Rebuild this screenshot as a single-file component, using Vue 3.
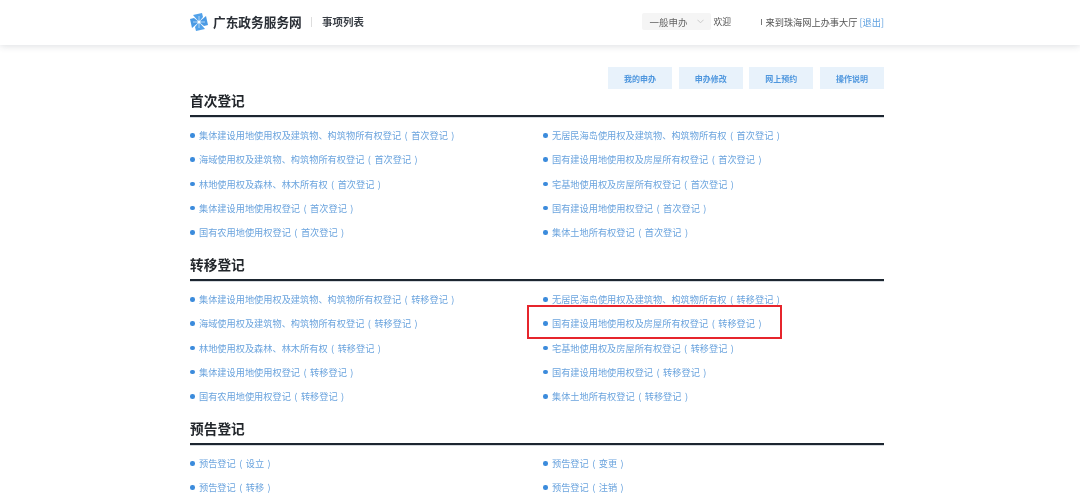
<script setup>
const tops = [
  '集体建设用地使用权及建筑物、构筑物所有权登记',
  '无居民海岛使用权及建筑物、构筑物所有权',
  '海域使用权及建筑物、构筑物所有权登记',
  '国有建设用地使用权及房屋所有权登记',
  '林地使用权及森林、林木所有权',
  '宅基地使用权及房屋所有权登记',
  '集体建设用地使用权登记',
  '国有建设用地使用权登记',
  '国有农用地使用权登记',
  '集体土地所有权登记',
]
const first = tops.map((t) => `${t}  (  首次登记  )`)
const second = tops.map((t) => `${t}  (  转移登记  )`)
const third = ['预告登记  (  设立  )', '预告登记  (  变更  )', '预告登记  (  转移  )', '预告登记  (  注销  )']
const sections = [
  { title: '首次登记', items: first },
  { title: '转移登记', items: second },
  { title: '预告登记', items: third },
]
const tabs = ['我的申办', '申办修改', '网上预约', '操作说明']
const marked = '国有建设用地使用权及房屋所有权登记  (  转移登记  )'
</script>

<template>
  <div class="page">
    <header class="header">
      <div class="wrap head-row">
        <svg class="logo" viewBox="0 0 18 18" width="18" height="18">
          <path d="M9 9 3 2 12 0 13 4Z" fill="#52a2ea" />
          <path d="M9 9 16 3 18 12 14 13Z" fill="#4a9ae4" />
          <path d="M9 9 15 16 6 18 5 14Z" fill="#52a2ea" />
          <path d="M9 9 2 15 0 6 4 5Z" fill="#4a9ae4" />
          <path d="M9 9 9 3M9 9 15 9M9 9 9 15M9 9 3 9" stroke="#d8ebfb" stroke-width=".7" />
          <circle cx="9" cy="9" r="1.6" fill="#fff" />
        </svg>
        <span class="brand">广东政务服务网</span>
        <i class="sep"></i>
        <span class="sub">事项列表</span>
        <div class="right">
          <div class="select">
            <span>一般申办</span>
            <svg viewBox="0 0 8 5" width="7" height="5"><path d="M.5.5 4 4 7.5.5" fill="none" stroke="#c4c4c4" /></svg>
          </div>
          <span class="hello">欢迎</span>
          <i class="tick"></i>
          <span class="hall">来到珠海网上办事大厅</span>
          <a class="exit">[退出]</a>
        </div>
      </div>
    </header>
    <main class="wrap main">
      <nav class="tabs">
        <a v-for="t in tabs" :key="t" class="tab">{{ t }}</a>
      </nav>
      <section v-for="s in sections" :key="s.title" class="section">
        <h2 class="title">{{ s.title }}</h2>
        <ul class="list">
          <li v-for="item in s.items" :key="item" class="item">
            <span>{{ item }}</span>
            <b v-if="item === marked" class="mark"></b>
          </li>
        </ul>
      </section>
    </main>
  </div>
</template>

<style>
html, body { margin: 0; background: #fff; overflow: hidden; }
</style>

<style scoped>
.page { height: 503px; overflow: hidden; font-family: "Noto Sans CJK SC", "Noto Sans", sans-serif; filter: blur(.3px); }
.wrap { width: 694px; margin: 0 auto; transform: translateX(-3px); }
.header { height: 45px; background: #fff; box-shadow: 0 1px 7px rgba(40, 50, 70, .16); }
.head-row { height: 43px; display: flex; align-items: center; }
.logo { margin-right: 5px; }
.brand { font-size: 12.7px; font-weight: 700; color: #2a2f36; width: 89px; white-space: nowrap; }
.sep { width: 1px; height: 10px; background: #ddd; margin: 0 10px 0 9px; }
.sub { font-size: 10.5px; font-weight: 700; color: #3a3f46; }
.right { margin-left: auto; display: flex; align-items: center; font-size: 9.2px; color: #555; white-space: nowrap; }
.select { width: 69px; height: 17px; box-sizing: border-box; background: #f5f5f5; border-radius: 2px; display: flex; align-items: center; justify-content: space-between; padding: 0 7px 0 8px; color: #666; margin-right: 3px; font-size: 9.5px; }
.hello { width: 47px; font-size: 8.8px; }
.tick { width: 1px; height: 6px; background: #777; margin-right: 4px; }
.exit { color: #5c9fdf; margin-left: 2px; }
.main { padding-top: 22px; }
.tabs { display: flex; justify-content: flex-end; gap: 6.67px; height: 22px; }
.tab { width: 64px; height: 22px; background: #e8f2fb; color: #4f97de; font-size: 8px; font-weight: 700; display: flex; align-items: center; justify-content: center; }
.section { height: 164px; }
.title { margin: 0; height: 28px; box-sizing: border-box; font-size: 13.7px; line-height: 22px; font-weight: 700; color: #22262b; border-bottom: 2px solid #1d2630; box-shadow: 0 1px 0 #d5d9de; }
.list { margin: 6px 0 0; padding: 0; list-style: none; display: grid; grid-template-columns: 353px 1fr; grid-auto-rows: 24.3px; }
.item { position: relative; padding-left: 9px; font-size: 9.2px; line-height: 24.3px; color: #6ba4de; white-space: pre; word-spacing: -.33px; }
.item::before { content: ""; position: absolute; left: 0; top: 10px; width: 4.5px; height: 4.5px; border-radius: 50%; background: #3b8bdc; }
.mark { position: absolute; left: -16px; top: -6px; width: 255px; height: 34px; border: 2px solid #e6252c; box-sizing: border-box; }
</style>
